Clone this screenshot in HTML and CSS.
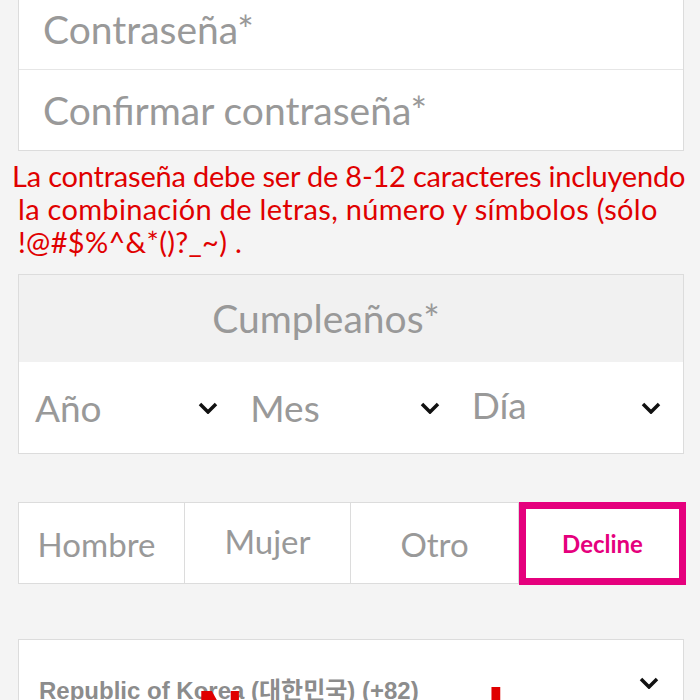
FILE: index.html
```html
<!DOCTYPE html>
<html lang="es">
	<head>
		<meta charset="UTF-8">
		<title>Registro</title>
		<link rel="stylesheet" href="styles.css">
	</head>
	<body>
		<div class="page">
			<div class="box pw">
				<div class="field">Contraseña*</div>
				<div class="field">Confirmar contraseña*</div>
			</div>

			<p class="note"><span class="first">La contraseña debe ser de 8-12 caracteres incluyendo</span><br>la combinación de letras, número y símbolos (sólo<br>!@#$%^&amp;*()?_~) .</p>

			<div class="box birth">
				<div class="birth-head">Cumpleaños*</div>
				<div class="birth-row">
					<div class="sel"><span>Año</span><svg class="chev" viewBox="0 0 20 12"><polyline points="2,2 10,10 18,2"/></svg></div>
					<div class="sel"><span>Mes</span><svg class="chev" viewBox="0 0 20 12"><polyline points="2,2 10,10 18,2"/></svg></div>
					<div class="sel"><span class="up">Día</span><svg class="chev" viewBox="0 0 20 12"><polyline points="2,2 10,10 18,2"/></svg></div>
				</div>
			</div>

			<div class="box gender">
				<div class="g first-g">Hombre</div>
				<div class="g up">Mujer</div>
				<div class="g">Otro</div>
				<div class="g active">Decline</div>
			</div>

			<div class="box phone">
				<span class="country">Republic of Korea (대한민국) (+82)</span>
				<svg class="chev" viewBox="0 0 20 12"><polyline points="2,2 10,10 18,2"/></svg>
				<span class="mark m1">N</span>
				<span class="mark m2">l</span>
			</div>
		</div>
	</body>
</html>
```

FILE: styles.css
```css
html, body {
	margin: 0;
	padding: 0;
	background: #f4f4f4;
	overflow: hidden;
	height: 700px;
}

.page {
	padding: 0 16px 0 18px;
	font-family: Lato, "Noto Sans", sans-serif;
	color: #999;
}

.box {
	background: #fff;
	border: 1px solid #dcdcdc;
}

.pw {
	margin-top: -12px;
}

.field {
	height: 80px;
	line-height: 80px;
	padding-left: 24px;
	font-size: 39px;
}

.field + .field {
	border-top: 1px solid #e6e6e6;
}

.note {
	margin: 8px 0 0;
	padding-left: 0;
	color: #e00000;
	font-size: 29px;
	line-height: 33px;
	letter-spacing: 0.3px;
	white-space: nowrap;
}

.note .first {
	margin-left: -6px;
	letter-spacing: -0.2px;
}

.birth {
	margin-top: 16px;
}

.birth-head {
	height: 87px;
	line-height: 87px;
	background: #f1f1f1;
	text-align: center;
	font-size: 39px;
	padding-right: 50px;
}

.birth-row {
	display: grid;
	grid-template-columns: 1fr 1fr 1fr;
	height: 91px;
}

.sel {
	display: flex;
	align-items: center;
	justify-content: space-between;
	padding: 0 22px 0 16px;
	font-size: 37px;
}

.sel:nth-child(2),
.sel:nth-child(3) {
	padding-left: 10px;
}

.sel span.up {
	position: relative;
	top: -3px;
}

.chev {
	width: 20px;
	height: 12px;
	fill: none;
	stroke: #111;
	stroke-width: 3.5;
}

.gender {
	margin-top: 48px;
	display: grid;
	grid-template-columns: 166px 166px 168px 1fr;
	height: 80px;
	border-right: none;
}

.g {
	display: flex;
	align-items: center;
	justify-content: center;
	border-right: 1px solid #dcdcdc;
	font-size: 33px;
	padding-top: 1px;
}

.g.first-g {
	padding-right: 10px;
}

.g.up {
	padding-top: 0;
	padding-bottom: 4px;
}

.g.active {
	margin: -1px -2px -2px 0;
	border: 7px solid #e5007d;
	color: #e5007d;
	font-size: 24px;
	font-weight: bold;
	padding: 0;
}

.phone {
	position: relative;
	margin-top: 55px;
	height: 120px;
	display: flex;
	align-items: flex-start;
	justify-content: space-between;
	padding: 31px 24px 0 20px;
}

.country {
	font-family: "Liberation Sans", Arial, "Noto Sans CJK KR", sans-serif;
	font-weight: bold;
	font-size: 24px;
	color: #8c8c8c;
}

.phone .chev {
	margin-top: 6px;
}

.mark {
	position: absolute;
	color: #e00000;
	font-family: "Liberation Sans", Arial, sans-serif;
	font-weight: bold;
	font-size: 64px;
	line-height: 1;
}

.m1 {
	left: 178px;
	top: 42px;
}

.m2 {
	left: 468px;
	top: 40px;
}
```
